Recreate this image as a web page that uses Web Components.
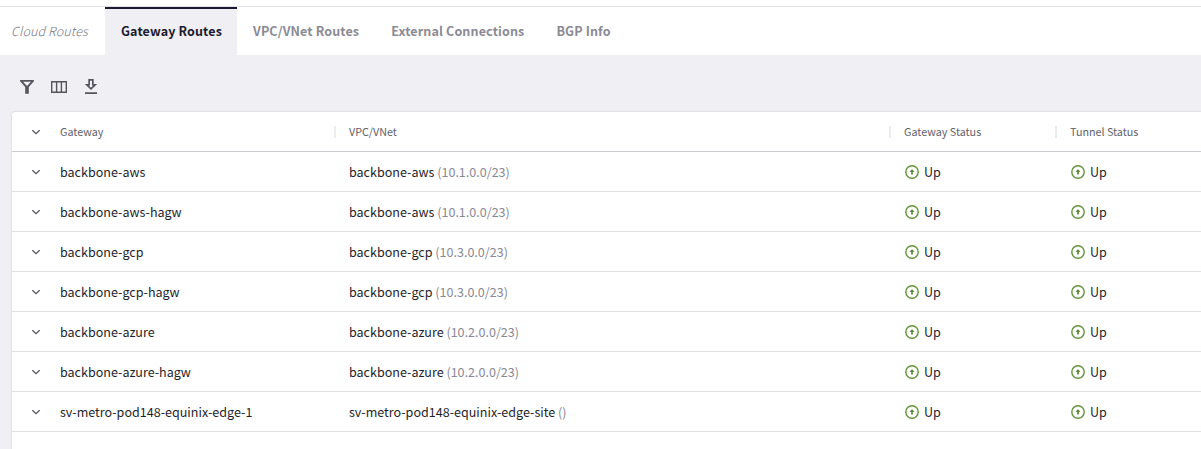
<!DOCTYPE html>
<html lang="en">
<head>
<meta charset="utf-8">
<title>Gateway Routes</title>
<style>
html, body { margin: 0; height: 100%; overflow: hidden; }
body { font-family: "Noto Sans CJK SC", "Noto Sans", sans-serif; background: #f0eff4; color: #1f1f2b; }
</style>
</head>
<body>
<routes-page></routes-page>
<script>
function define(name, html, setup) {
  const template = document.createElement('template');
  template.innerHTML = html;
  customElements.define(name, class extends HTMLElement {
    constructor() {
      super();
      this.attachShadow({ mode: 'open' }).append(template.content.cloneNode(true));
    }
    connectedCallback() { if (setup) setup(this); }
  });
}

const icons = {
  filter: '<path d="M5.1 5.1h13.8v1.1L13.8 12v6.7h-3.6V12L5.1 6.2z M8 6.7l4 4.4 4-4.4z" fill="#55555e" fill-rule="evenodd"/>',
  columns: '<path d="M4.7 6.7h14.6v10.6H4.7z M9.6 6.7v10.6 M14.4 6.7v10.6" fill="none" stroke="#55555e" stroke-width="1.4"/>',
  download: '<path d="M9.3 4h5.4v5h3.5L12 15.1 5.8 9h3.5z M11 5.7v4.9H9.9l2.1 2.1 2.1-2.1H13V5.7z M6 17.2h12v1.7H6z" fill="#55555e" fill-rule="evenodd"/>',
  chevron: '<path d="M8.3 10.3L12 13.7l3.7-3.4" fill="none" stroke="#55555e" stroke-width="1.3"/>',
  up: '<circle cx="12" cy="12" r="6.2" fill="none" stroke="#639638" stroke-width="1.4"/><path d="M12 9.2l2.5 2.6h-1.7v2.8h-1.6v-2.8H9.5z" fill="#4f8524"/>'
};

define('ui-icon', `<style>:host{display:block;width:24px;height:24px;flex:none}svg{display:block}</style><svg width="24" height="24" viewBox="0 0 24 24"></svg>`,
  el => { el.shadowRoot.querySelector('svg').innerHTML = icons[el.getAttribute('name')]; });

define('nav-tab', `<style>
  :host{display:flex;box-sizing:border-box;align-items:center;padding:0 16px 3px;border-top:2px solid transparent;height:48px;font-size:12.53px;font-weight:700;line-height:20px;color:#8b8a94;white-space:nowrap;letter-spacing:.13px}
  :host([active]){width:132px;background:#f0eff4;border-top-color:#1b1b2f;color:#1b1b2f}
  :host([muted]){width:109px;padding-left:15px;padding-right:0;font-weight:300;font-style:italic;color:#77767f}
</style><slot></slot>`);

define('nav-tabs', `<style>:host{display:flex;box-sizing:border-box;margin-top:6px;height:49px;border-top:1px solid #e1e0e8;background:#fff}div{display:flex;margin-left:-4px}</style><div><slot></slot></div>`);

define('tool-bar', `<style>:host{display:flex;gap:8px;padding:20px 0 12px 15px;height:24px}</style><slot></slot>`);

define('route-row', `<style>
  :host{display:grid;grid-template-columns:48px 289px 555px 166px 1fr;align-items:center;box-sizing:border-box;height:40px;border-bottom:1px solid #e0e0e5;font-size:12.55px;line-height:20px;white-space:nowrap}
  :host([head]){border-bottom-color:#c9c9d1;font-size:10.75px;color:#62626c}
  ui-icon{margin-left:12px}
</style><ui-icon name="chevron"></ui-icon><slot></slot>`);

define('head-cell', `<style>:host{display:flex;align-items:center;height:24px;position:relative}
  :host([split])::before{content:"";position:absolute;left:-15px;top:6px;width:2px;height:12px;background:#ececf0}
</style><slot></slot>`);

define('text-cell', `<style>:host{display:block}::slotted(span){color:#898893}</style><slot></slot>`);

define('status-cell', `<style>:host{display:flex;align-items:center;height:24px;margin-left:-4px}</style><ui-icon name="up"></ui-icon><slot></slot>`);

define('route-table', `<style>
  :host{display:block;box-sizing:border-box;margin-left:11px;height:360px;border:1px solid #e2e1e8;border-right:0;border-radius:4px 0 0 0;background:#fff}
</style>
<route-row head><head-cell>Gateway</head-cell><head-cell split>VPC/VNet</head-cell><head-cell split>Gateway Status</head-cell><head-cell split>Tunnel Status</head-cell></route-row>
<section></section>`, el => {
  const rows = [
    ['backbone-aws', 'backbone-aws', '10.1.0.0/23'],
    ['backbone-aws-hagw', 'backbone-aws', '10.1.0.0/23'],
    ['backbone-gcp', 'backbone-gcp', '10.3.0.0/23'],
    ['backbone-gcp-hagw', 'backbone-gcp', '10.3.0.0/23'],
    ['backbone-azure', 'backbone-azure', '10.2.0.0/23'],
    ['backbone-azure-hagw', 'backbone-azure', '10.2.0.0/23'],
    ['sv-metro-pod148-equinix-edge-1', 'sv-metro-pod148-equinix-edge-site', '']
  ];
  el.shadowRoot.querySelector('section').innerHTML = rows.map(([gateway, vpc, cidr]) =>
    `<route-row><text-cell>${gateway}</text-cell><text-cell>${vpc} <span>(${cidr})</span></text-cell><status-cell>Up</status-cell><status-cell>Up</status-cell></route-row>`).join('');
});

define('routes-page', `<style>:host{display:flow-root;height:449px;overflow:hidden;background:linear-gradient(#fff 6px,#f0eff4 6px)}</style>
<nav-tabs><nav-tab muted>Cloud Routes</nav-tab><nav-tab active>Gateway Routes</nav-tab><nav-tab>VPC/VNet Routes</nav-tab><nav-tab>External Connections</nav-tab><nav-tab>BGP Info</nav-tab></nav-tabs>
<tool-bar><ui-icon name="filter"></ui-icon><ui-icon name="columns"></ui-icon><ui-icon name="download"></ui-icon></tool-bar>
<route-table></route-table>`);
</script>
</body>
</html>
